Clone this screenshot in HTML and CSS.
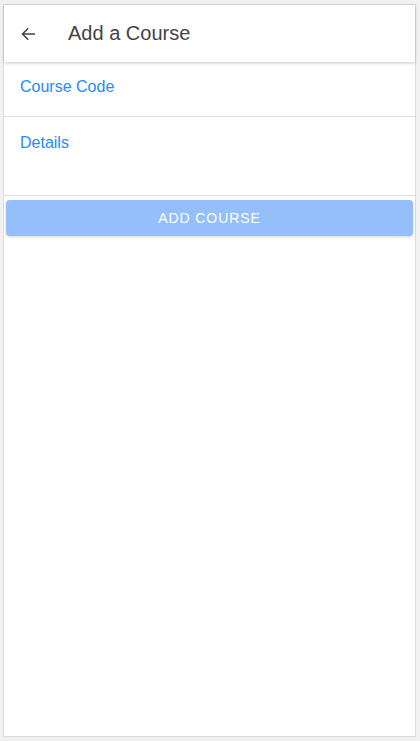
FILE: index.html
```html
<!DOCTYPE html>
<html>
<head>
<meta charset="utf-8">
<link rel="stylesheet" href="styles.css">
</head>
<body>
<div class="app">
  <header class="toolbar">
    <button class="back" aria-label="Back">
      <svg width="16" height="16" viewBox="0 0 16 16"><path d="M15 8H2.5M8.2 2.3L2.5 8l5.7 5.7" fill="none" stroke="#444" stroke-width="1.6"/></svg>
    </button>
    <h1 class="title">Add a Course</h1>
  </header>
  <div class="field">
    <span class="label">Course Code</span>
  </div>
  <div class="field field-tall">
    <span class="label">Details</span>
  </div>
  <div class="actions">
    <button class="submit">ADD COURSE</button>
  </div>
</div>
</body>
</html>
```
FILE: styles.css
```css
html, body {
  margin: 0;
  padding: 0;
  height: 100%;
}
body {
  background: #f1f1f1;
  font-family: "Liberation Sans", Arial, sans-serif;
  padding: 4px 4px 4px 3px;
  box-sizing: border-box;
}
.app {
  height: 100%;
  box-sizing: border-box;
  background: #fff;
  border: 1px solid #dcdcdc;
  display: flex;
  flex-direction: column;
}
.toolbar {
  height: 57px;
  flex: none;
  display: flex;
  align-items: center;
  box-shadow: 0 1px 3px rgba(0,0,0,0.22);
  position: relative;
  z-index: 1;
}
.back {
  border: none;
  background: none;
  padding: 0;
  margin-left: 16px;
  width: 16px;
  height: 16px;
  display: flex;
}
.title {
  margin: 0 0 0 32px;
  font-size: 20px;
  font-weight: 400;
  color: #444;
}
.field {
  height: 55px;
  flex: none;
  border-bottom: 1px solid #dedede;
  box-sizing: border-box;
  padding: 16px 0 0 16px;
}
.field-tall {
  height: 79px;
  padding-top: 17px;
}
.label {
  font-size: 16px;
  color: #2a89f5;
}
.actions {
  padding: 4px 2px;
}
.submit {
  width: 100%;
  height: 36px;
  border: none;
  border-radius: 4px;
  background: #95bffb;
  color: #fff;
  font-family: "Liberation Sans", Arial, sans-serif;
  font-size: 14px;
  letter-spacing: 0.9px;
  box-shadow: 0 1px 3px rgba(0,0,0,0.18);
}
```
